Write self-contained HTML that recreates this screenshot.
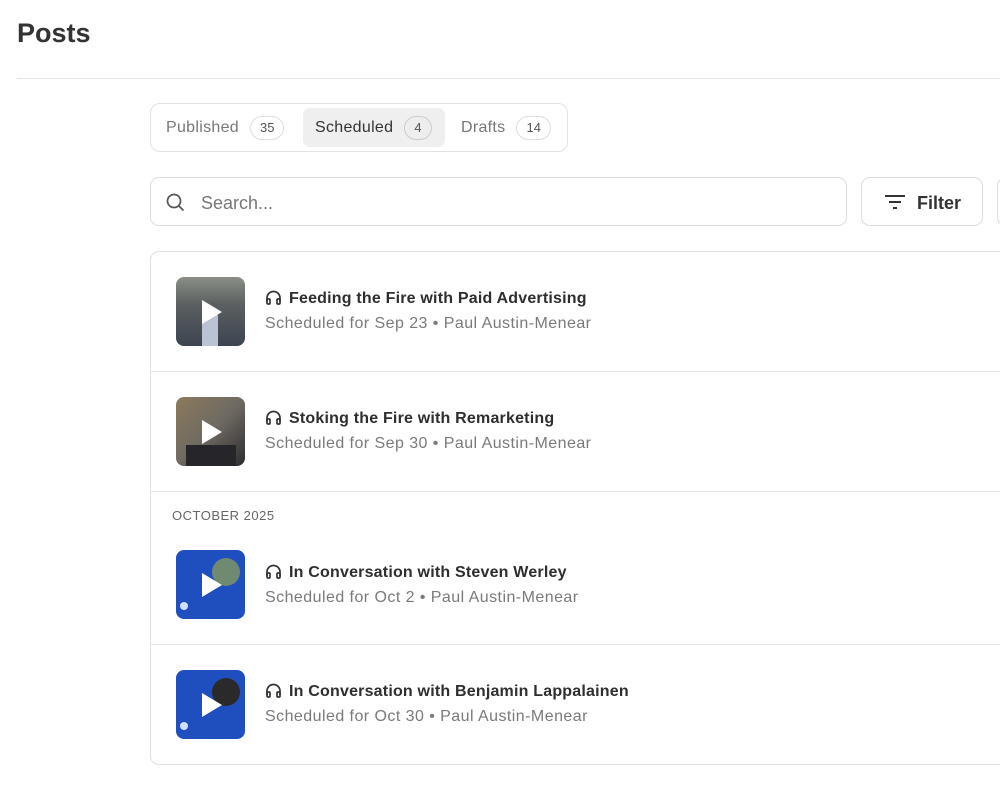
<!DOCTYPE html>
<html><head><meta charset="utf-8"><style>
*{box-sizing:border-box;margin:0;padding:0}
body{width:1000px;height:808px;overflow:hidden;background:#fff;font-family:"Liberation Sans",sans-serif;color:#2b2b2b;position:relative}
h1{position:absolute;left:17px;top:18px;font-size:27px;font-weight:700;color:#333}
.hr{position:absolute;left:17px;right:0;top:78px;border-top:1px solid #e4e4e4}
.tabs{position:absolute;left:150px;top:103px;width:418px;height:49px;border:1px solid #e2e2e2;border-radius:10px}
.tab{position:absolute;top:4px;height:39px;border-radius:7px;font-size:16px;color:#777;display:flex;align-items:center;padding-left:12px;letter-spacing:.3px}
.tab.on{background:#efefef;color:#333}
.badge{display:inline-block;margin-left:11px;border:1px solid #ddd;border-radius:12px;height:24px;line-height:22px;font-size:13px;padding:0 9px;color:#555;background:#fff;letter-spacing:0}
.tab.on .badge{background:#eee;border-color:#ccc}
.search{position:absolute;left:150px;top:177px;width:697px;height:49px;border:1px solid #ddd;border-radius:9px}
.search span{position:absolute;left:50px;top:15px;font-size:18px;color:#777}
.filter{position:absolute;left:861px;top:177px;width:122px;height:49px;border:1px solid #ddd;border-radius:9px;font-size:18px;font-weight:700;color:#333}
.filter span{position:absolute;left:55px;top:15px}
.next{position:absolute;left:997px;top:177px;width:20px;height:49px;border:1px solid #ddd;border-radius:9px}
.list{position:absolute;left:150px;top:251px;width:870px;height:514px;border:1px solid #e0e0e0;border-radius:9px}
.row{position:absolute;left:0;right:0;border-bottom:1px solid #e4e4e4}
.thumb{position:absolute;left:25px;width:69px;height:69px;border-radius:8px;overflow:hidden}
.play{position:absolute;left:26px;top:23px;width:0;height:0;border-left:20px solid #fff;border-top:12px solid transparent;border-bottom:12px solid transparent}
.t{position:absolute;left:114px;font-size:16px;font-weight:700;color:#2e2e2e;letter-spacing:.2px}
.t svg{vertical-align:-2px;margin-right:7px}
.s{position:absolute;left:114px;font-size:16px;color:#7a7a7a;letter-spacing:.45px}
.hd{position:absolute;left:21px;top:16px;font-size:13px;letter-spacing:.5px;color:#666}
</style></head><body>
<h1>Posts</h1>
<div class="hr"></div>
<div class="tabs">
 <div class="tab" style="left:3px">Published<span class="badge">35</span></div>
 <div class="tab on" style="left:152px;width:142px">Scheduled<span class="badge">4</span></div>
 <div class="tab" style="left:298px">Drafts<span class="badge">14</span></div>
</div>
<div class="search"><svg style="position:absolute;left:15px;top:15px" width="19" height="19" viewBox="0 0 19 19" fill="none" stroke="#555" stroke-width="1.7"><circle cx="8" cy="8" r="6.5"/><path d="M13 13l4.5 4.5"/></svg><span>Search...</span></div>
<div class="filter"><svg style="position:absolute;left:22px;top:16px" width="22" height="16" viewBox="0 0 22 16" stroke="#333" stroke-width="2"><path d="M1 2h20M5 8h12M9 14h4"/></svg><span>Filter</span></div>
<div class="next"></div>
<div class="list">
 <div class="row" style="top:0;height:120px">
  <div class="thumb" style="top:25px;background:linear-gradient(180deg,#8a8f86 0%,#5b5f60 40%,#3c4450 100%)"><div style="position:absolute;left:26px;top:38px;width:16px;height:31px;background:#b9c3d4"></div><div class="play"></div></div>
  <div class="t" style="top:38px"><svg width="17" height="15" viewBox="0 0 17 15" fill="none" stroke="#333" stroke-width="1.7"><path d="M2 12V8a6.5 6.5 0 0113 0v4"/><rect x="2" y="9" width="3" height="5" rx="1"/><rect x="12" y="9" width="3" height="5" rx="1"/></svg>Feeding the Fire with Paid Advertising</div>
  <div class="s" style="top:63px">Scheduled for Sep 23 • Paul Austin-Menear</div>
 </div>
 <div class="row" style="top:120px;height:120px">
  <div class="thumb" style="top:25px;background:linear-gradient(135deg,#8c7a5c 0%,#6e6a62 50%,#2d2c30 100%)"><div style="position:absolute;left:10px;top:48px;width:50px;height:21px;background:#26262a"></div><div class="play"></div></div>
  <div class="t" style="top:38px"><svg width="17" height="15" viewBox="0 0 17 15" fill="none" stroke="#333" stroke-width="1.7"><path d="M2 12V8a6.5 6.5 0 0113 0v4"/><rect x="2" y="9" width="3" height="5" rx="1"/><rect x="12" y="9" width="3" height="5" rx="1"/></svg>Stoking the Fire with Remarketing</div>
  <div class="s" style="top:63px">Scheduled for Sep 30 • Paul Austin-Menear</div>
 </div>
 <div class="row" style="top:240px;height:153px">
  <div class="hd">OCTOBER 2025</div>
  <div class="thumb" style="top:58px;background:#1f4fbf"><div style="position:absolute;left:36px;top:8px;width:28px;height:28px;border-radius:50%;background:#6f8a70"></div><div style="position:absolute;left:4px;top:52px;width:8px;height:8px;border-radius:50%;background:#cfe0ff"></div><div class="play"></div></div>
  <div class="t" style="top:72px"><svg width="17" height="15" viewBox="0 0 17 15" fill="none" stroke="#333" stroke-width="1.7"><path d="M2 12V8a6.5 6.5 0 0113 0v4"/><rect x="2" y="9" width="3" height="5" rx="1"/><rect x="12" y="9" width="3" height="5" rx="1"/></svg>In Conversation with Steven Werley</div>
  <div class="s" style="top:97px">Scheduled for Oct 2 • Paul Austin-Menear</div>
 </div>
 <div class="row" style="top:393px;height:120px;border-bottom:none">
  <div class="thumb" style="top:25px;background:#1f4fbf"><div style="position:absolute;left:36px;top:8px;width:28px;height:28px;border-radius:50%;background:#2a2a2a"></div><div style="position:absolute;left:4px;top:52px;width:8px;height:8px;border-radius:50%;background:#cfe0ff"></div><div class="play"></div></div>
  <div class="t" style="top:38px"><svg width="17" height="15" viewBox="0 0 17 15" fill="none" stroke="#333" stroke-width="1.7"><path d="M2 12V8a6.5 6.5 0 0113 0v4"/><rect x="2" y="9" width="3" height="5" rx="1"/><rect x="12" y="9" width="3" height="5" rx="1"/></svg>In Conversation with Benjamin Lappalainen</div>
  <div class="s" style="top:63px">Scheduled for Oct 30 • Paul Austin-Menear</div>
 </div>
</div>
</body></html>
